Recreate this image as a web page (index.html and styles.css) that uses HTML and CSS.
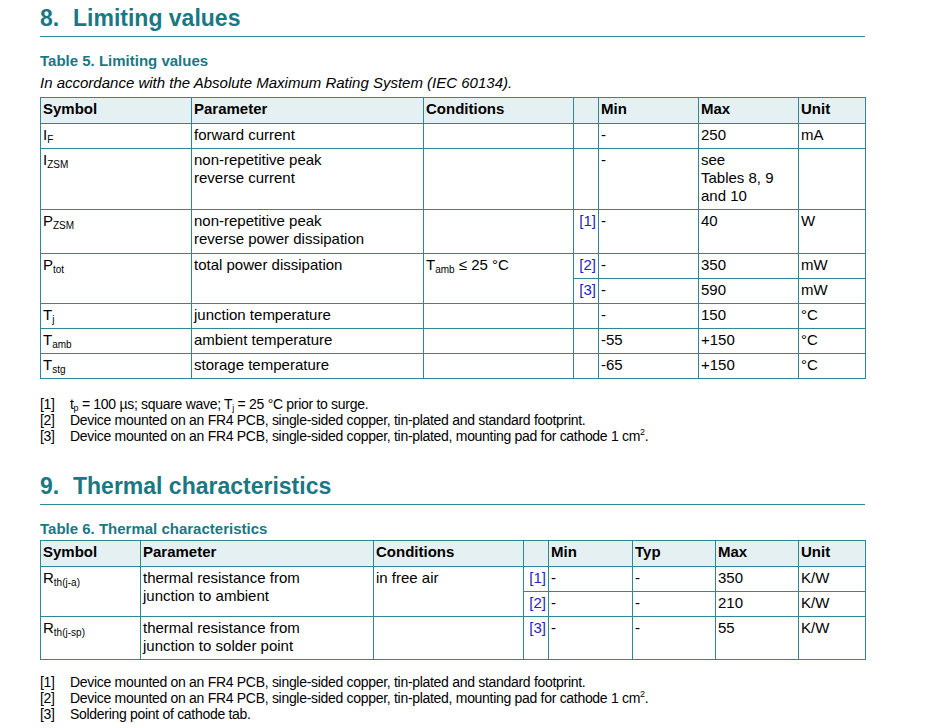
FILE: index.html
```html
<!DOCTYPE html>
<html lang="en">
<head>
<meta charset="utf-8">
<title>Limiting values and thermal characteristics</title>
<link rel="stylesheet" href="styles.css">
</head>
<body>
<main class="page">
  <section class="section">
    <h2 class="section-title"><span class="num">8.</span>Limiting values</h2>
    <p class="table-caption">Table 5. Limiting values</p>
    <p class="table-note">In accordance with the Absolute Maximum Rating System (IEC 60134).</p>
    <table class="data-table t5">
      <colgroup>
        <col class="w151"><col class="w232"><col class="w150"><col class="w25"><col class="w100"><col class="w100"><col class="w67">
      </colgroup>
      <thead>
        <tr><th>Symbol</th><th>Parameter</th><th>Conditions</th><th></th><th>Min</th><th>Max</th><th>Unit</th></tr>
      </thead>
      <tbody>
        <tr><td>I<sub>F</sub></td><td>forward current</td><td></td><td class="ref"></td><td>-</td><td>250</td><td>mA</td></tr>
        <tr><td>I<sub>ZSM</sub></td><td>non-repetitive peak<br>reverse current</td><td></td><td class="ref"></td><td>-</td><td>see<br>Tables 8, 9<br>and 10</td><td></td></tr>
        <tr class="tall"><td>P<sub>ZSM</sub></td><td>non-repetitive peak<br>reverse power dissipation</td><td></td><td class="ref">[1]</td><td>-</td><td>40</td><td>W</td></tr>
        <tr><td rowspan="2">P<sub>tot</sub></td><td rowspan="2">total power dissipation</td><td rowspan="2">T<sub>amb</sub> ≤ 25 °C</td><td class="ref">[2]</td><td>-</td><td>350</td><td>mW</td></tr>
        <tr><td class="ref">[3]</td><td>-</td><td>590</td><td>mW</td></tr>
        <tr><td>T<sub>j</sub></td><td>junction temperature</td><td></td><td class="ref"></td><td>-</td><td>150</td><td>°C</td></tr>
        <tr><td>T<sub>amb</sub></td><td>ambient temperature</td><td></td><td class="ref"></td><td>-55</td><td>+150</td><td>°C</td></tr>
        <tr><td>T<sub>stg</sub></td><td>storage temperature</td><td></td><td class="ref"></td><td>-65</td><td>+150</td><td>°C</td></tr>
      </tbody>
    </table>
    <ol class="footnotes fn-first">
      <li class="fn"><span class="fn-num">[1]</span><span>t<sub>p</sub> = 100 µs; square wave; T<sub>j</sub> = 25 °C prior to surge.</span></li>
      <li class="fn"><span class="fn-num">[2]</span><span>Device mounted on an FR4 PCB, single-sided copper, tin-plated and standard footprint.</span></li>
      <li class="fn"><span class="fn-num">[3]</span><span>Device mounted on an FR4 PCB, single-sided copper, tin-plated, mounting pad for cathode 1 cm<sup>2</sup>.</span></li>
    </ol>
  </section>

  <section class="section section-next">
    <h2 class="section-title"><span class="num">9.</span>Thermal characteristics</h2>
    <p class="table-caption">Table 6. Thermal characteristics</p>
    <table class="data-table t6">
      <colgroup>
        <col class="w100"><col class="w233"><col class="w150"><col class="w25"><col class="w84"><col class="w83"><col class="w83"><col class="w67">
      </colgroup>
      <thead>
        <tr><th>Symbol</th><th>Parameter</th><th>Conditions</th><th></th><th>Min</th><th>Typ</th><th>Max</th><th>Unit</th></tr>
      </thead>
      <tbody>
        <tr><td rowspan="2">R<sub>th(j-a)</sub></td><td rowspan="2">thermal resistance from<br>junction to ambient</td><td rowspan="2">in free air</td><td class="ref">[1]</td><td>-</td><td>-</td><td>350</td><td>K/W</td></tr>
        <tr><td class="ref">[2]</td><td>-</td><td>-</td><td>210</td><td>K/W</td></tr>
        <tr><td>R<sub>th(j-sp)</sub></td><td>thermal resistance from<br>junction to solder point</td><td></td><td class="ref">[3]</td><td>-</td><td>-</td><td>55</td><td>K/W</td></tr>
      </tbody>
    </table>
    <ol class="footnotes fn-second">
      <li class="fn"><span class="fn-num">[1]</span><span>Device mounted on an FR4 PCB, single-sided copper, tin-plated and standard footprint.</span></li>
      <li class="fn"><span class="fn-num">[2]</span><span>Device mounted on an FR4 PCB, single-sided copper, tin-plated, mounting pad for cathode 1 cm<sup>2</sup>.</span></li>
      <li class="fn"><span class="fn-num">[3]</span><span>Soldering point of cathode tab.</span></li>
    </ol>
  </section>
</main>
</body>
</html>
```

FILE: styles.css
```css
html, body {
  margin: 0;
  padding: 0;
  background: #ffffff;
}

body {
  font-family: "Liberation Sans", Arial, sans-serif;
  color: #000000;
}

.page {
  width: 825px;
  padding-left: 40px;
}

.section-title {
  margin: 0;
  padding: 4px 0 4px;
  font-size: 23px;
  line-height: 28px;
  font-weight: bold;
  color: #1a7884;
  border-bottom: 1px solid #2d8894;
}

.section-title .num {
  display: inline-block;
  width: 33px;
}

.section-next {
  margin-top: 24px;
}

.table-caption {
  margin: 15px 0 0;
  font-size: 15px;
  line-height: 18px;
  font-weight: bold;
  color: #1a7884;
}

.table-note {
  margin: 3.5px 0 0;
  font-size: 15px;
  line-height: 18px;
  font-style: italic;
}

.data-table {
  width: 825px;
  border-collapse: collapse;
  table-layout: fixed;
  font-size: 15px;
  line-height: 18px;
}

.t5 {
  margin-top: 5px;
}

.t6 {
  margin-top: 2px;
}

.w25 { width: 25px; }
.w67 { width: 67px; }
.w83 { width: 83px; }
.w84 { width: 84px; }
.w100 { width: 100px; }
.w150 { width: 150px; }
.w151 { width: 151px; }
.w232 { width: 232px; }
.w233 { width: 233px; }

.data-table th,
.data-table td {
  border: 1px solid #2d8894;
  padding: 2px 2px 4px 2px;
  vertical-align: top;
  text-align: left;
  white-space: nowrap;
}

.data-table th {
  background: #e4f0f2;
  font-weight: bold;
  padding-bottom: 5px;
}

.data-table .ref {
  text-align: right;
  color: #2424c0;
  padding-right: 2px;
}

.data-table tr.tall {
  height: 44px;
}

sub {
  font-size: 10px;
  line-height: 0;
  vertical-align: -3px;
}

sup {
  font-size: 9px;
  line-height: 0;
  vertical-align: 6px;
}

.footnotes {
  list-style: none;
  margin: 17px 0 0;
  padding: 0;
  font-size: 14px;
  line-height: 16px;
  letter-spacing: -0.3px;
}

.fn-second {
  margin-top: 14px;
}

.footnotes sub {
  font-size: 9px;
  vertical-align: -2px;
}

.fn {
  display: flex;
}

.fn-num {
  flex: none;
  width: 30px;
}
```
